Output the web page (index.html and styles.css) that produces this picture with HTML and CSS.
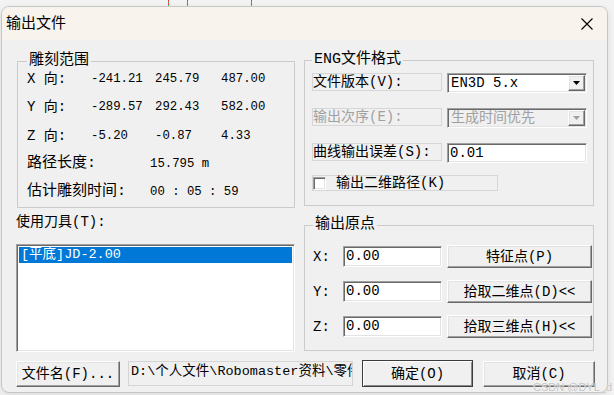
FILE: index.html
```html
<!DOCTYPE html>
<html lang="zh-CN">
<head>
  <meta charset="UTF-8" />
  <title>输出文件</title>
  <link rel="stylesheet" href="styles.css">
</head>
<body>
  <div class="marks">
    <span class="mark m1"></span>
    <span class="mark m2"></span>
    <span class="mark m3"></span>
  </div>

  <div class="window">
    <div class="titlebar">
      <span class="title">输出文件</span>
      <svg class="close" width="12" height="12" viewBox="0 0 12 12">
        <path d="M0.5 0.5L11.5 11.5M11.5 0.5L0.5 11.5" stroke="#000" stroke-width="1.1" fill="none"/>
      </svg>
    </div>

    <div class="client">
      <div class="col">
        <fieldset class="group range">
          <legend>雕刻范围</legend>
          <div class="range-row"><span class="axis">X 向:</span><span class="num">-241.21</span><span class="num">245.79</span><span class="num">487.00</span></div>
          <div class="range-row"><span class="axis">Y 向:</span><span class="num">-289.57</span><span class="num">292.43</span><span class="num">582.00</span></div>
          <div class="range-row"><span class="axis">Z 向:</span><span class="num">-5.20</span><span class="num">-0.87</span><span class="num">4.33</span></div>
          <div class="info-row"><span class="big">路径长度:</span><span class="num">15.795 m</span></div>
          <div class="info-row"><span class="big">估计雕刻时间:</span><span class="num">00 : 05 : 59</span></div>
        </fieldset>

        <div class="tools-label">使用刀具(T):</div>
        <div class="listbox sunken">
          <div class="item selected">[平底]JD-2.00</div>
        </div>
      </div>

      <div class="col right">
        <fieldset class="group format">
          <legend>ENG文件格式</legend>
          <div class="form-row">
            <span class="label-box">文件版本(V):</span>
            <div class="combo sunken">
              <span class="combo-text">EN3D 5.x</span>
              <span class="drop raised"><svg width="7" height="4" viewBox="0 0 7 4"><path d="M0 0H7L3.5 4Z" fill="#000"/></svg></span>
            </div>
          </div>
          <div class="form-row disabled">
            <span class="label-box">输出次序(E):</span>
            <div class="combo sunken">
              <span class="combo-text">生成时间优先</span>
              <span class="drop raised"><svg width="7" height="4" viewBox="0 0 7 4"><path d="M0 0H7L3.5 4Z" fill="#a0a0a0"/></svg></span>
            </div>
          </div>
          <div class="form-row">
            <span class="label-box">曲线输出误差(S):</span>
            <div class="edit sunken wide">0.01</div>
          </div>
          <div class="check-row">
            <span class="checkbox sunken"></span>
            <span>输出二维路径(K)</span>
          </div>
        </fieldset>

        <fieldset class="group origin">
          <legend>输出原点</legend>
          <div class="origin-row">
            <span class="coord">X:</span>
            <div class="edit sunken">0.00</div>
            <button class="btn raised">特征点(P)</button>
          </div>
          <div class="origin-row">
            <span class="coord">Y:</span>
            <div class="edit sunken">0.00</div>
            <button class="btn raised">拾取二维点(D)&lt;&lt;</button>
          </div>
          <div class="origin-row">
            <span class="coord">Z:</span>
            <div class="edit sunken">0.00</div>
            <button class="btn raised">拾取三维点(H)&lt;&lt;</button>
          </div>
        </fieldset>
      </div>
    </div>

    <div class="footer-row">
      <button class="btn raised file-btn">文件名(F)...</button>
      <div class="path">D:\个人文件\Robomaster资料\零件\输出.eng</div>
      <button class="btn raised default ok-btn">确定(O)</button>
      <button class="btn raised cancel-btn">取消(C)</button>
    </div>
  </div>

  <div class="watermark">CSDN @DYL_d</div>
</body>
</html>
```

FILE: styles.css
```css
body {
  margin: 0;
  height: 395px;
  overflow: hidden;
  position: relative;
  background: #f3f3f3;
  font-family: "Liberation Mono", "Noto Sans CJK SC", monospace;
  font-size: 14px;
  color: #000;
}
.marks {
  display: flex;
  height: 6px;
}
.mark {
  width: 1px;
  height: 6px;
  background: repeating-linear-gradient(#e04040 0 2px, #4cc757 2px 3px);
}
.m1 { margin-left: 168px; }
.m2 { margin-left: 18px; }
.m3 { margin-left: 63px; }

.window {
  margin-left: 1px;
  width: 607px;
  height: 387px;
  box-sizing: border-box;
  border: 1px solid #c6c6c6;
  border-radius: 8px;
  background: #f0f0f0;
  overflow: hidden;
  box-shadow: 0 2px 6px rgba(0, 0, 0, 0.10);
}
.titlebar {
  height: 33px;
  background: #f8f3ec;
  display: flex;
  align-items: center;
  justify-content: space-between;
  padding: 0 14px 0 4px;
}
.title {
  font-family: "Noto Sans CJK SC", sans-serif;
  font-size: 15px;
  line-height: 18px;
  margin-top: -3px;
}
.close {
  display: block;
}

.client {
  display: grid;
  grid-template-columns: 279px 290px;
  column-gap: 9px;
  padding: 12px 0 0 14px;
}
.col {
  display: flex;
  flex-direction: column;
}
.col.right {
  margin-top: -1px;
}

/* group boxes */
.group {
  margin: 0;
  min-inline-size: 0;
  border: 1px solid #cbcbcb;
  padding: 0 0 0 9px;
}
.group legend {
  padding: 0 2px;
  height: 18px;
  line-height: 18px;
  font-size: 15px;
  background: #f0f0f0;
}
.range {
  margin-left: 1px;
  padding-bottom: 6px;
  display: flex;
  flex-direction: column;
  gap: 10.3px;
}
.range-row {
  display: grid;
  grid-template-columns: 64px 64px 66px auto;
  height: 18px;
  line-height: 18px;
}
.info-row {
  display: grid;
  grid-template-columns: 123px auto;
  height: 18px;
  line-height: 18px;
}
.num {
  font-size: 12.3px;
}
.big {
  font-size: 15px;
}

.tools-label {
  margin-top: 5px;
  height: 18px;
  line-height: 18px;
}
.listbox {
  margin-top: 13px;
  height: 108px;
  box-sizing: border-box;
  background: #fff;
  padding: 2px;
}
.item {
  height: 16px;
  line-height: 16px;
  padding-left: 2px;
  font-size: 13.5px;
}
.item.selected {
  background: #0078d7;
  color: #fff;
}

/* 3d borders */
.sunken {
  border: 1px solid;
  border-color: #a0a0a0 #ffffff #ffffff #a0a0a0;
  box-shadow: inset 1px 1px #696969, inset -1px -1px #e3e3e3;
}
.raised {
  border: 1px solid;
  border-color: #ffffff #696969 #696969 #ffffff;
  box-shadow: inset -1px -1px #a0a0a0, inset 1px 1px #e3e3e3;
  background: #f0f0f0;
}

/* format group */
.format {
  padding: 4px 0 14px 7px;
}
.form-row {
  display: flex;
  gap: 5px;
  height: 20px;
  margin-bottom: 15px;
}
.label-box {
  width: 130px;
  height: 18px;
  box-sizing: border-box;
  border: 1px solid #d6d6d6;
  line-height: 16px;
  white-space: nowrap;
}
.combo {
  width: 140px;
  height: 20px;
  box-sizing: border-box;
  background: #fff;
  padding: 1px;
  display: flex;
  align-items: center;
  line-height: 16px;
}
.combo-text {
  flex: 1;
  padding-left: 2px;
}
.drop {
  width: 17px;
  height: 16px;
  box-sizing: border-box;
  display: flex;
  align-items: center;
  justify-content: center;
}
.disabled .label-box,
.disabled .combo-text {
  color: #a0a0a0;
}
.disabled .combo {
  background: #f0f0f0;
}
.edit {
  height: 21px;
  width: 99px;
  box-sizing: border-box;
  background: #fff;
  padding-left: 2px;
  line-height: 19px;
}
.edit.wide {
  width: 140px;
  height: 20px;
  line-height: 18px;
}
.check-row {
  margin-top: -3px;
  width: 186px;
  height: 16px;
  box-sizing: border-box;
  border: 1px solid #d6d6d6;
  display: flex;
  align-items: center;
  gap: 10px;
  line-height: 14px;
}
.checkbox {
  width: 13px;
  height: 13px;
  box-sizing: border-box;
  background: #fff;
}

/* origin group */
.origin {
  margin-top: 10px;
  padding: 11px 0 12px 8px;
  display: flex;
  flex-direction: column;
  gap: 12px;
}
.origin-row {
  display: flex;
  align-items: center;
  height: 23px;
}
.coord {
  width: 30px;
}
.btn {
  font-family: inherit;
  font-size: 14px;
  color: #000;
  padding: 0;
  margin: 0;
  height: 23px;
  width: 145px;
  margin-left: 5px;
  box-sizing: border-box;
  line-height: 18px;
}
.btn.default {
  border-color: #3c3c3c;
  box-shadow: inset 1px 1px #fff, inset -1px -1px #8a8a8a;
}

/* footer */
.footer-row {
  display: flex;
  align-items: flex-start;
  padding: 9px 0 0 14px;
}
.file-btn {
  width: 104px;
  height: 26px;
  margin-left: 0;
}
.path {
  width: 225px;
  height: 25px;
  box-sizing: border-box;
  margin-left: 8px;
  border: 1px solid #d4d4d4;
  background: #f0f0f0;
  padding-left: 2px;
  line-height: 20px;
  font-size: 13.5px;
  white-space: nowrap;
  overflow: hidden;
}
.ok-btn {
  width: 111px;
  height: 27px;
  margin-left: 9px;
  margin-top: -1px;
}
.cancel-btn {
  width: 112px;
  height: 26px;
  margin-left: 10px;
}

.watermark {
  position: absolute;
  left: 533px;
  top: 381px;
  font-family: "Liberation Sans", sans-serif;
  font-size: 11px;
  color: #c4c4c4;
  text-shadow: 0 0 1px #fff;
}
```
